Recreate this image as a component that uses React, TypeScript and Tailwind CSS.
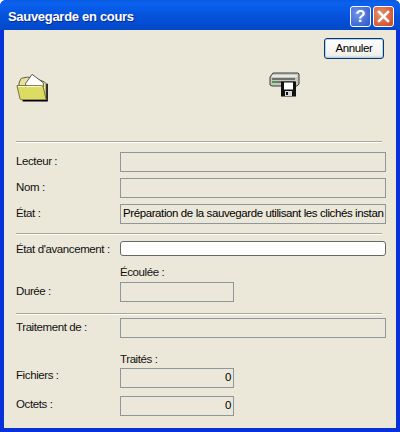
const FONT = "font-['Liberation_Sans',Arial,sans-serif]";
const TEXT = "text-[11.5px] tracking-[-0.4px]";

function FolderIcon() {
	return (
		<svg className="block" width="33" height="31" viewBox="0 0 35 32">
			<path d="M3 12 L5 7 Q5.500 6 7 6 L12 5 L20 6 L30 10 L32 12 L32 27 L7 27 Z" fill="#e8e29a" stroke="#57533a" strokeWidth="1" />
			<path d="M10 12 L17 2 L29 11 L29 15 L11 15 Z" fill="#ffffff" stroke="#2a2a20" strokeWidth="0.8" />
			<path d="M1 14 L27 14 Q29 14 29 16 L32 29 L6 29 Q4 29 4 27 Z" fill="#dcdc62" stroke="#6e6c3c" strokeWidth="1" />
			<path d="M33 12 L33 30 L7 30" fill="none" stroke="#000000" strokeWidth="1.500" />
			<path d="M2 15 L27 15" fill="none" stroke="#ffffd8" strokeWidth="1" />
		</svg>
	);
}

function BackupIcon() {
	return (
		<svg className="block" width="32" height="26" viewBox="0 0 32 26">
			<path d="M1 6 L4 2 L29 2 L30 3 L30 13 L28 15 L3 15 L1 14 Z" fill="#c4c6c0" stroke="#3c3c38" strokeWidth="1" />
			<path d="M3 5 L28 5" stroke="#f4f4f0" strokeWidth="1.500" />
			<path d="M3 8 L26 8 M3 11 L26 11" stroke="#1c1c1c" strokeWidth="1" />
			<path d="M3 11 L9 11" stroke="#49a049" strokeWidth="1.500" />
			<rect x="12" y="10.500" width="15" height="15" fill="#111111" />
			<rect x="15" y="11.500" width="9" height="7" fill="#ffffff" />
			<rect x="16" y="20" width="7" height="5" fill="#d8d8d8" />
			<rect x="17" y="21" width="2" height="3" fill="#111111" />
		</svg>
	);
}

function HelpButton() {
	return (
		<div className="flex h-[21px] w-[21px] items-center justify-center rounded-[3px] border border-white bg-[radial-gradient(circle_at_35%_35%,#6f94ec,#2a55c8)] font-bold text-[17px] leading-none text-white">
			?
		</div>
	);
}

function CloseButton() {
	return (
		<div className="flex h-[21px] w-[21px] items-center justify-center rounded-[3px] border border-white bg-[radial-gradient(circle_at_35%_35%,#e8906c,#cc4420)]">
			<svg width="13" height="13" viewBox="0 0 13 13">
				<path d="M2 2 L11 11 M11 2 L2 11" stroke="#ffffff" strokeWidth="2.600" strokeLinecap="square" />
			</svg>
		</div>
	);
}

function Separator() {
	return <div className="mr-[4px] border-[#aca899] border-t border-b-white border-b" />;
}

function Field({
	value,
	right,
	short,
}: {
	value?: string;
	right?: boolean;
	short?: boolean;
}) {
	return (
		<div
			className={`flex h-[20px] items-center overflow-hidden whitespace-nowrap border border-[#8e979c] bg-[#ebe8d9] px-[2px] text-black ${TEXT} ${
				short ? "w-[114px]" : "w-[266px]"
			} ${right ? "justify-end" : ""}`}
		>
			{value}
		</div>
	);
}

function Row({
	label,
	children,
	className,
	labelClass,
}: {
	label: string;
	children: React.ReactNode;
	className?: string;
	labelClass?: string;
}) {
	return (
		<div className={`flex items-center ${className ?? ""}`}>
			<span className={`w-[104px] shrink-0 whitespace-nowrap leading-[14px] ${TEXT} ${labelClass ?? ""}`}>
				{label}
			</span>
			{children}
		</div>
	);
}

export default function App() {
	return (
		<div className={`${FONT} flex h-[432px] w-[400px] flex-col overflow-hidden rounded-t-[6px] bg-[#0831d9] text-[#111]`}>
			{/* Barre de titre */}
			<header className="flex h-[30px] shrink-0 items-center justify-between bg-[linear-gradient(180deg,#0a5be0_0%,#0a62ee_12%,#0553dc_50%,#0348c8_100%)] pt-[3px] pr-[6px] pl-[8px]">
				<span className="font-bold text-[13px] tracking-[-0.3px] text-white [text-shadow:1px_1px_0_#0a2a90]">
					Sauvegarde en cours
				</span>
				<div className="flex gap-[2px]">
					<HelpButton />
					<CloseButton />
				</div>
			</header>

			<main className="mx-[4px] mb-[4px] flex min-h-0 flex-1 flex-col bg-[#ebe8d9] pr-[10px] pl-[12px]">
				<div className="flex justify-end pt-[8px] pr-[2px]">
					<button
						className={`flex h-[21px] w-[60px] items-center justify-center rounded-[3px] border border-[#003c74] bg-[linear-gradient(180deg,#ffffff,#f0f0ea_85%,#d6d0c5)] text-black shadow-[inset_0_0_0_1px_#b9cdf0] ${TEXT}`}
						type="button"
					>
						Annuler
					</button>
				</div>

				{/* Icônes */}
				<div className="mt-[11px] flex h-[40px] items-start">
					<div className="pt-[2px]">
						<FolderIcon />
					</div>
					<div className="mt-[1px] ml-[220px]">
						<BackupIcon />
					</div>
				</div>

				<div className="mt-[31px]">
					<Separator />
				</div>

				<div className="mt-[9px] flex flex-col gap-[6px]">
					<Row label="Lecteur :" labelClass="mb-[2px]">
						<Field />
					</Row>
					<Row label="Nom :" labelClass="mb-[2px]">
						<Field />
					</Row>
					<Row label="État :" labelClass="mb-[2px]">
						<Field value="Préparation de la sauvegarde utilisant les clichés instan" />
					</Row>
				</div>

				<div className="mt-[9px]">
					<Separator />
				</div>

				<Row label="État d'avancement :" className="mt-[6px]">
					<div className="h-[15px] w-[266px] rounded-[3px] border border-[#686868] bg-white" />
				</Row>

				<div className={`mt-[9px] pl-[104px] leading-[14px] ${TEXT}`}>Écoulée :</div>
				<Row label="Durée :" className="mt-[3px]" labelClass="mb-[2px]">
					<Field short />
				</Row>

				<div className="mt-[11px]">
					<Separator />
				</div>

				<Row label="Traitement de :" className="mt-[3px]" labelClass="mb-[2px]">
					<Field />
				</Row>

				<div className={`mt-[14px] pl-[104px] leading-[14px] ${TEXT}`}>Traités :</div>
				<div className="mt-[2px] flex flex-col gap-[8px]">
					<Row label="Fichiers :" labelClass="mb-[6px]">
						<Field value="0" right short />
					</Row>
					<Row label="Octets :" labelClass="mb-[5px]">
						<Field value="0" right short />
					</Row>
				</div>
			</main>
		</div>
	);
}
